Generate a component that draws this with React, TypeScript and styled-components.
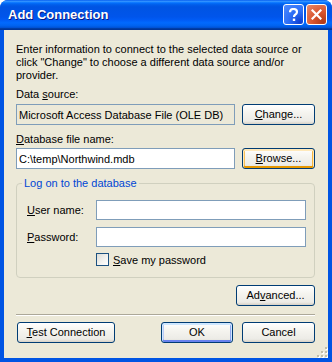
import * as React from 'react';
import styled, { createGlobalStyle, css } from 'styled-components';

const GlobalStyle = createGlobalStyle`
  html, body {
    margin: 0;
    padding: 0;
    background: #fff;
  }
  body {
    font-family: 'Liberation Sans', Arial, sans-serif;
    font-size: 11px;
    color: #000;
  }
`;

const Window = styled.div`
  width: 332px;
  height: 362px;
  display: flex;
  flex-direction: column;
  box-sizing: border-box;
  background: #0054e3;
  border-radius: 8px 8px 0 0;
  overflow: hidden;
  position: relative;
`;

const TitleBar = styled.div`
  height: 30px;
  flex: none;
  display: flex;
  align-items: center;
  padding: 0 5px 0 8px;
  background: linear-gradient(
    to bottom,
    #0058ee 0%,
    #3593ff 4%,
    #288eff 6%,
    #127dff 8%,
    #036ffc 10%,
    #0262ee 14%,
    #0057e5 20%,
    #0054e3 24%,
    #0055eb 56%,
    #005bf5 66%,
    #026afe 76%,
    #0062ef 86%,
    #0052d6 92%,
    #0040ab 94%,
    #003092 100%
  );
`;

const Caption = styled.div`
  flex: 1;
  font-family: 'Liberation Sans', Arial, sans-serif;
  font-weight: bold;
  font-size: 13px;
  color: #fff;
  text-shadow: 1px 1px 0 #0a1883;
  padding-bottom: 1px;
`;

const CaptionButtons = styled.div`
  display: flex;
  gap: 2px;
  padding-bottom: 1px;
`;

const CaptionButton = styled.div<{ $kind: 'help' | 'close' }>`
  width: 21px;
  height: 21px;
  box-sizing: border-box;
  border: 1px solid #fff;
  border-radius: 3px;
  display: flex;
  align-items: center;
  justify-content: center;
  ${(p) =>
    p.$kind === 'help'
      ? css`
          background: radial-gradient(circle at 85% 90%, #0e3fd1 0%, #2a6cf5 45%, #4f8cff 100%);
        `
      : css`
          background: radial-gradient(circle at 85% 90%, #b13a18 0%, #d9552e 45%, #e88a6c 100%);
        `}
`;

const Body = styled.div`
  flex: 1;
  margin: 0 4px 4px 4px;
  background: #ece9d8;
  padding: 0 13px 0 12px;
  display: flex;
  flex-direction: column;
`;

const Intro = styled.p`
  margin: 13px 0 0 0;
  line-height: 13px;
`;

const FieldLabel = styled.div<{ $top: number }>`
  margin-top: ${(p) => p.$top}px;
  line-height: 13px;
`;

const Row = styled.div<{ $top: number }>`
  margin-top: ${(p) => p.$top}px;
  display: flex;
  align-items: center;
  gap: 7px;
`;

const TextBox = styled.div<{ $readOnly?: boolean; $height?: number }>`
  box-sizing: border-box;
  flex: 1;
  height: ${(p) => p.$height ?? 21}px;
  border: 1px solid #7f9db9;
  background: ${(p) => (p.$readOnly ? '#ece9d8' : '#fff')};
  padding: 0 2px;
  display: flex;
  align-items: center;
  white-space: nowrap;
  overflow: hidden;
  font-size: 11px;
`;

const Button = styled.div<{ $width: number; $state?: 'default' | 'hot' }>`
  box-sizing: border-box;
  width: ${(p) => p.$width}px;
  height: 21px;
  flex: none;
  border: 1px solid #003c74;
  border-radius: 3px;
  background: linear-gradient(to bottom, #ffffff 0%, #f5f4ef 40%, #ecebe6 85%, #d6d0c5 100%);
  display: flex;
  align-items: center;
  justify-content: center;
  font-size: 11px;
  padding-bottom: 1px;
  ${(p) =>
    p.$state === 'default' &&
    css`
      box-shadow: inset 0 1px 0 1px #cee7ff, inset 0 -1px 0 1px #6982ee, inset 1px 0 0 1px #bccbf5,
        inset -1px 0 0 1px #93a8ed;
    `}
  ${(p) =>
    p.$state === 'hot' &&
    css`
      box-shadow: inset 0 1px 0 1px #ffe9ba, inset 0 -1px 0 1px #e59700, inset 1px 0 0 1px #f8c15b,
        inset -1px 0 0 1px #f5b53f;
    `}
`;

const Key = styled.span`
  text-decoration: underline;
  text-underline-offset: 1px;
`;

const GroupBox = styled.fieldset`
  margin: 8px 0 0 0;
  padding: 10px 8px 11px 10px;
  border: 1px solid #d0d0bf;
  border-radius: 4px;
  display: flex;
  flex-direction: column;
  gap: 7px;
  min-width: 0;
`;

const Legend = styled.legend`
  color: #0046d5;
  padding: 0 2px;
  margin-left: -5px;
  line-height: 13px;
`;

const LoginRow = styled.div`
  display: flex;
  align-items: center;
`;

const LoginLabel = styled.div`
  width: 69px;
  flex: none;
`;

const CheckRow = styled.div`
  display: flex;
  align-items: center;
  gap: 4px;
  padding-left: 69px;
  margin-top: -1px;
`;

const CheckBox = styled.div`
  width: 13px;
  height: 13px;
  box-sizing: border-box;
  border: 1px solid #1c5180;
  background: linear-gradient(135deg, #dcdcd7 0%, #f4f4f1 60%, #ffffff 100%);
`;

const RightRow = styled.div<{ $top: number }>`
  margin-top: ${(p) => p.$top}px;
  display: flex;
  justify-content: flex-end;
`;

const Separator = styled.div`
  margin-top: 8px;
  height: 1px;
  background: #aca899;
  border-bottom: 1px solid #fff;
`;

const ButtonBar = styled.div`
  margin-top: 6px;
  display: flex;
  align-items: center;
  justify-content: space-between;
  padding-left: 1px;
`;

const ButtonGroup = styled.div`
  display: flex;
  gap: 9px;
`;

const Grip = styled.svg`
  position: absolute;
  right: 4px;
  bottom: 4px;
`;

function HelpGlyph() {
  return (
    <svg width="11" height="14" viewBox="0 0 11 14">
      <path
        d="M2 4.2 C2 1.8 3.6 1 5.5 1 C7.6 1 9 2.1 9 4 C9 5.6 8 6.3 6.9 7 C6.2 7.5 6 7.9 6 9"
        fill="none"
        stroke="#fff"
        strokeWidth="2.2"
      />
      <rect x="4.8" y="10.6" width="2.4" height="2.4" fill="#fff" />
    </svg>
  );
}

function CloseGlyph() {
  return (
    <svg width="11" height="11" viewBox="0 0 11 11">
      <path d="M1.5 1.5 L9.5 9.5 M9.5 1.5 L1.5 9.5" stroke="#fff" strokeWidth="2.2" strokeLinecap="square" />
    </svg>
  );
}

function ResizeGrip() {
  const dots = [
    [9, 1],
    [9, 5],
    [5, 5],
    [9, 9],
    [5, 9],
    [1, 9],
  ];
  return (
    <Grip width="12" height="12" viewBox="0 0 12 12">
      {dots.map(([x, y]) => (
        <React.Fragment key={`${x}-${y}`}>
          <rect x={x + 1} y={y + 1} width="2" height="2" fill="#fff" />
          <rect x={x} y={y} width="2" height="2" fill="#c1bea9" />
        </React.Fragment>
      ))}
    </Grip>
  );
}

export default function App() {
  return (
    <>
      <GlobalStyle />
      <Window>
        <TitleBar>
          <Caption>Add Connection</Caption>
          <CaptionButtons>
            <CaptionButton $kind="help">
              <HelpGlyph />
            </CaptionButton>
            <CaptionButton $kind="close">
              <CloseGlyph />
            </CaptionButton>
          </CaptionButtons>
        </TitleBar>
        <Body>
          <Intro>
            Enter information to connect to the selected data source or click "Change" to choose a
            different data source and/or provider.
          </Intro>

          <FieldLabel $top={6}>
            Data <Key>s</Key>ource:
          </FieldLabel>
          <Row $top={3}>
            <TextBox $readOnly>Microsoft Access Database File (OLE DB)</TextBox>
            <Button $width={73}>
              <span>
                <Key>C</Key>hange...
              </span>
            </Button>
          </Row>

          <FieldLabel $top={8}>
            <Key>D</Key>atabase file name:
          </FieldLabel>
          <Row $top={2}>
            <TextBox>C:\temp\Northwind.mdb</TextBox>
            <Button $width={73} $state="hot">
              <span>
                <Key>B</Key>rowse...
              </span>
            </Button>
          </Row>

          <GroupBox>
            <Legend>Log on to the database</Legend>
            <LoginRow>
              <LoginLabel>
                <Key>U</Key>ser name:
              </LoginLabel>
              <TextBox $height={20} />
            </LoginRow>
            <LoginRow>
              <LoginLabel>
                <Key>P</Key>assword:
              </LoginLabel>
              <TextBox $height={20} />
            </LoginRow>
            <CheckRow>
              <CheckBox />
              <span>
                <Key>S</Key>ave my password
              </span>
            </CheckRow>
          </GroupBox>

          <RightRow $top={7}>
            <Button $width={79}>
              <span>
                Ad<Key>v</Key>anced...
              </span>
            </Button>
          </RightRow>

          <Separator />

          <ButtonBar>
            <Button $width={98}>
              <span>
                <Key>T</Key>est Connection
              </span>
            </Button>
            <ButtonGroup>
              <Button $width={72} $state="default">
                OK
              </Button>
              <Button $width={73}>Cancel</Button>
            </ButtonGroup>
          </ButtonBar>
        </Body>
        <ResizeGrip />
      </Window>
    </>
  );
}
